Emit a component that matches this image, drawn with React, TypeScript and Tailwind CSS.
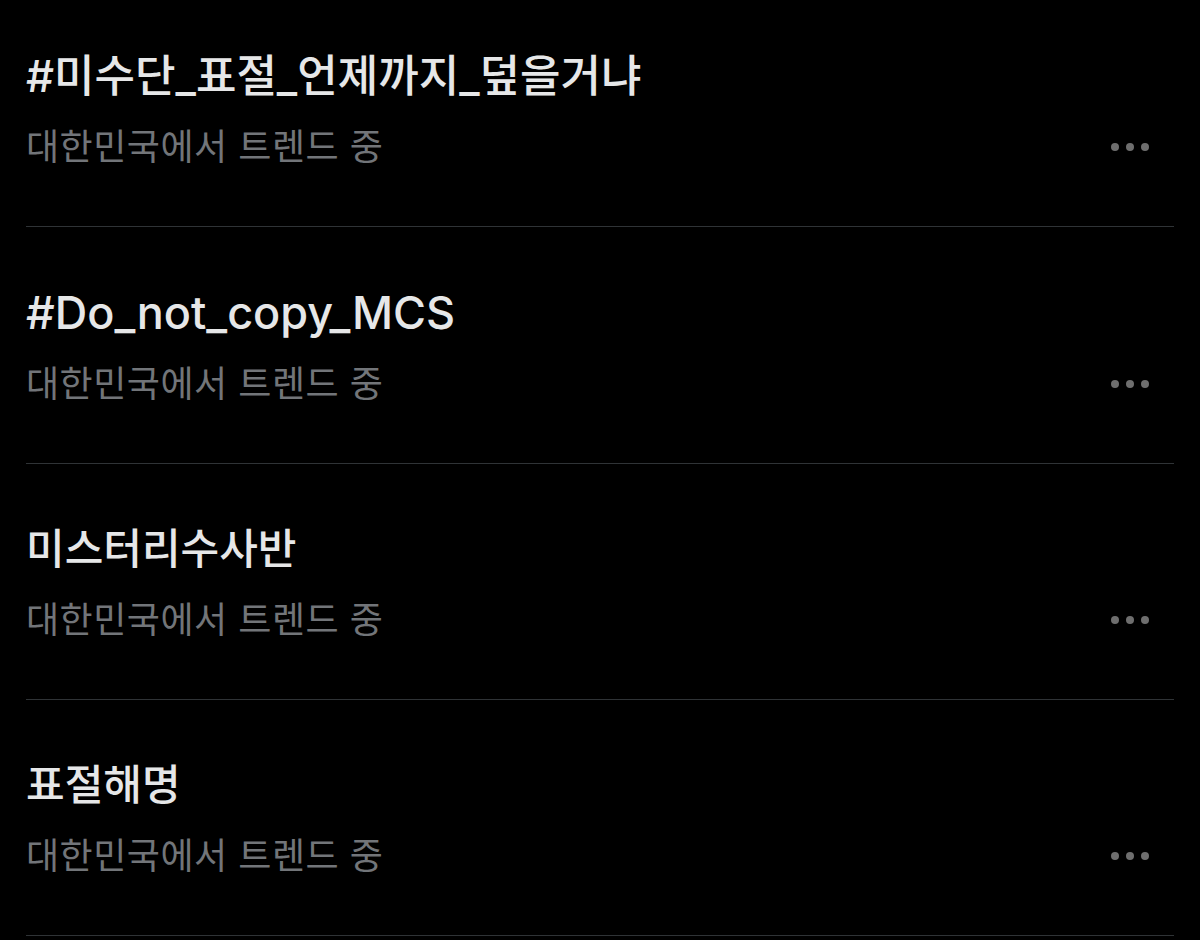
import React from 'react';

const trends = [
  { title: '#미수단_표절_언제까지_덮을거냐', size: 'text-[44px]', pt: 'pt-[52px]' },
  { title: '#Do_not_copy_MCS', size: 'text-[45px]', pt: 'pt-[62px]' },
  { title: '미스터리수사반', size: 'text-[42px]', pt: 'pt-[61px]' },
  { title: '표절해명', size: 'text-[42px]', pt: 'pt-[61px]' },
];

function Dots() {
  return (
    <div className="flex items-center gap-[7px] pr-[25px]">
      <span className="w-[8px] h-[8px] rounded-full bg-[#6e6e6e]" />
      <span className="w-[8px] h-[8px] rounded-full bg-[#6e6e6e]" />
      <span className="w-[8px] h-[8px] rounded-full bg-[#6e6e6e]" />
    </div>
  );
}

export default function App() {
  return (
    <div
      className="w-[1200px] h-[940px] overflow-hidden bg-black px-[26px]"
      style={{ fontFamily: 'Inter, "Noto Sans CJK KR", sans-serif' }}
    >
      {trends.map((t) => (
        <div key={t.title} className={`border-b border-[#2f3336] pb-[57px] ${t.pt}`}>
          <div className={`${t.size} leading-[48px] font-medium text-[#e6e7e8]`}>{t.title}</div>
          <div className="mt-[25px] flex items-center justify-between">
            <span className="text-[36px] leading-[44px] tracking-[0.5px] text-[#727579]">대한민국에서 트렌드 중</span>
            <Dots />
          </div>
        </div>
      ))}
    </div>
  );
}
